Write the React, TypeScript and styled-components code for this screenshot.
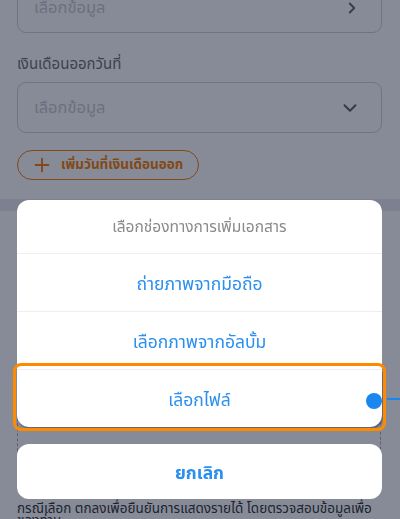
import React from "react";
import styled, { createGlobalStyle } from "styled-components";
import { ChevronRight, ChevronDown, Plus } from "lucide-react";

const GlobalStyle = createGlobalStyle`
  html, body {
    margin: 0;
    padding: 0;
    width: 400px;
    height: 519px;
    overflow: hidden;
    background: #ffffff;
    font-family: "Noto Sans Thai", "Noto Sans", "DejaVu Sans", sans-serif;
  }
  * { box-sizing: border-box; }
`;

const Page = styled.div`
  width: 400px;
  height: 519px;
  overflow: hidden;
  position: relative;
  background: #ffffff;
`;

const Form = styled.div`
  display: flex;
  flex-direction: column;
  align-items: flex-start;
  padding: 0 18px 0 17px;
  margin-top: -18px;
`;

const Field = styled.div<{ $top?: number }>`
  width: 100%;
  height: 51px;
  margin-top: ${(p) => p.$top ?? 0}px;
  border: 1px solid #cfd0d6;
  border-radius: 9px;
  display: flex;
  align-items: center;
  justify-content: space-between;
  padding: 0 20px 0 16px;
`;

const Placeholder = styled.span`
  font-size: 16.5px;
  color: #c6c8ce;
`;

const Label = styled.div`
  margin-top: 21px;
  font-size: 15px;
  line-height: 22px;
  color: #6a6a6e;
`;

const Pill = styled.div`
  margin-top: 17px;
  height: 30px;
  padding: 0 15px 0 13px;
  border: 1.5px solid #f27a00;
  border-radius: 15px;
  display: flex;
  align-items: center;
  gap: 8px;
  color: #f27a00;
  font-size: 13.5px;
  font-weight: 700;
`;

const Band = styled.div`
  margin-top: 19px;
  height: 12px;
  background: #eaebef;
`;

const Section = styled.div`
  padding: 14px 19px 0 17px;
  display: flex;
  flex-direction: column;
`;

const SectionTitle = styled.div`
  font-size: 15px;
  font-weight: 700;
  color: #333;
  line-height: 24px;
`;

const SectionText = styled.div<{ $top?: number }>`
  margin-top: ${(p) => p.$top ?? 0}px;
  font-size: 13.5px;
  line-height: 12px;
  color: #2e2e2e;
`;

const DropBox = styled.div`
  margin-top: 14px;
  height: 180px;
  border: 1px dashed #a9acb4;
  border-radius: 8px;
`;

const Overlay = styled.div`
  position: fixed;
  inset: 0;
  background: rgba(15, 23, 47, 0.5);
  display: flex;
  flex-direction: column;
  justify-content: flex-end;
  padding: 0 18px 20px 17px;
`;

const Sheet = styled.div`
  background: #ffffff;
  border-radius: 12px;
  display: flex;
  flex-direction: column;
`;

const SheetTitle = styled.div`
  height: 54px;
  display: flex;
  align-items: center;
  justify-content: center;
  padding-top: 2px;
  font-size: 15.5px;
  color: #8a8a8e;
  border-bottom: 1px solid #eeeeee;
`;

const Option = styled.div<{ $last?: boolean }>`
  position: relative;
  height: ${(p) => (p.$last ? 57 : 58)}px;
  display: flex;
  align-items: center;
  justify-content: center;
  padding-top: 3px;
  font-size: 17.5px;
  color: #2a8ff0;
  border-bottom: ${(p) => (p.$last ? "none" : "1px solid #eeeeee")};
  border-radius: ${(p) => (p.$last ? "0 0 12px 12px" : "0")};
  box-shadow: ${(p) => (p.$last ? "1px 2px 1px rgba(60, 60, 70, 0.45)" : "none")};
`;

const Highlight = styled.div`
  position: absolute;
  top: -7px;
  bottom: -4px;
  left: -4px;
  right: -4px;
  border: 3px solid #ff8a00;
  border-radius: 8px;
  pointer-events: none;
`;

const Dot = styled.div`
  position: absolute;
  right: 0px;
  top: 50%;
  width: 16px;
  height: 16px;
  margin-top: -6px;
  border-radius: 50%;
  background: #1a86f0;
`;

const Wire = styled.div`
  position: absolute;
  left: calc(100% + 4px);
  top: 50%;
  width: 30px;
  height: 2px;
  margin-top: 1px;
  background: #1a86f0;
`;

const Cancel = styled.div`
  margin-top: 17px;
  height: 55px;
  background: #ffffff;
  border-radius: 12px;
  display: flex;
  align-items: center;
  justify-content: center;
  padding-top: 3px;
  font-size: 17.5px;
  font-weight: 700;
  color: #2a8ff0;
`;

export default function App() {
  return (
    <>
      <GlobalStyle />
      <Page>
        <Form>
          <Field>
            <Placeholder>เลือกข้อมูล</Placeholder>
            <ChevronRight size={18} strokeWidth={2.4} color="#5e5e62" />
          </Field>
          <Label>เงินเดือนออกวันที่</Label>
          <Field $top={6}>
            <Placeholder>เลือกข้อมูล</Placeholder>
            <ChevronDown size={22} strokeWidth={2.2} color="#5e5e62" />
          </Field>
          <Pill>
            <Plus size={22} strokeWidth={2} />
            เพิ่มวันที่เงินเดือนออก
          </Pill>
        </Form>
        <Band />
        <Section>
          <SectionTitle>เอกสารประกอบ</SectionTitle>
          <SectionText $top={40}>• แนบเอกสารแสดงรายได้</SectionText>
          <DropBox />
          <SectionText $top={8}>
            กรณีเลือก ตกลงเพื่อยืนยันการแสดงรายได้ โดยตรวจสอบข้อมูลเพื่อ
            ของท่าน
          </SectionText>
        </Section>
        <Overlay>
          <Sheet>
            <SheetTitle>เลือกช่องทางการเพิ่มเอกสาร</SheetTitle>
            <Option>ถ่ายภาพจากมือถือ</Option>
            <Option>เลือกภาพจากอัลบั้ม</Option>
            <Option $last>
              เลือกไฟล์
              <Highlight>
                <Wire />
              </Highlight>
              <Dot />
            </Option>
          </Sheet>
          <Cancel>ยกเลิก</Cancel>
        </Overlay>
      </Page>
    </>
  );
}
